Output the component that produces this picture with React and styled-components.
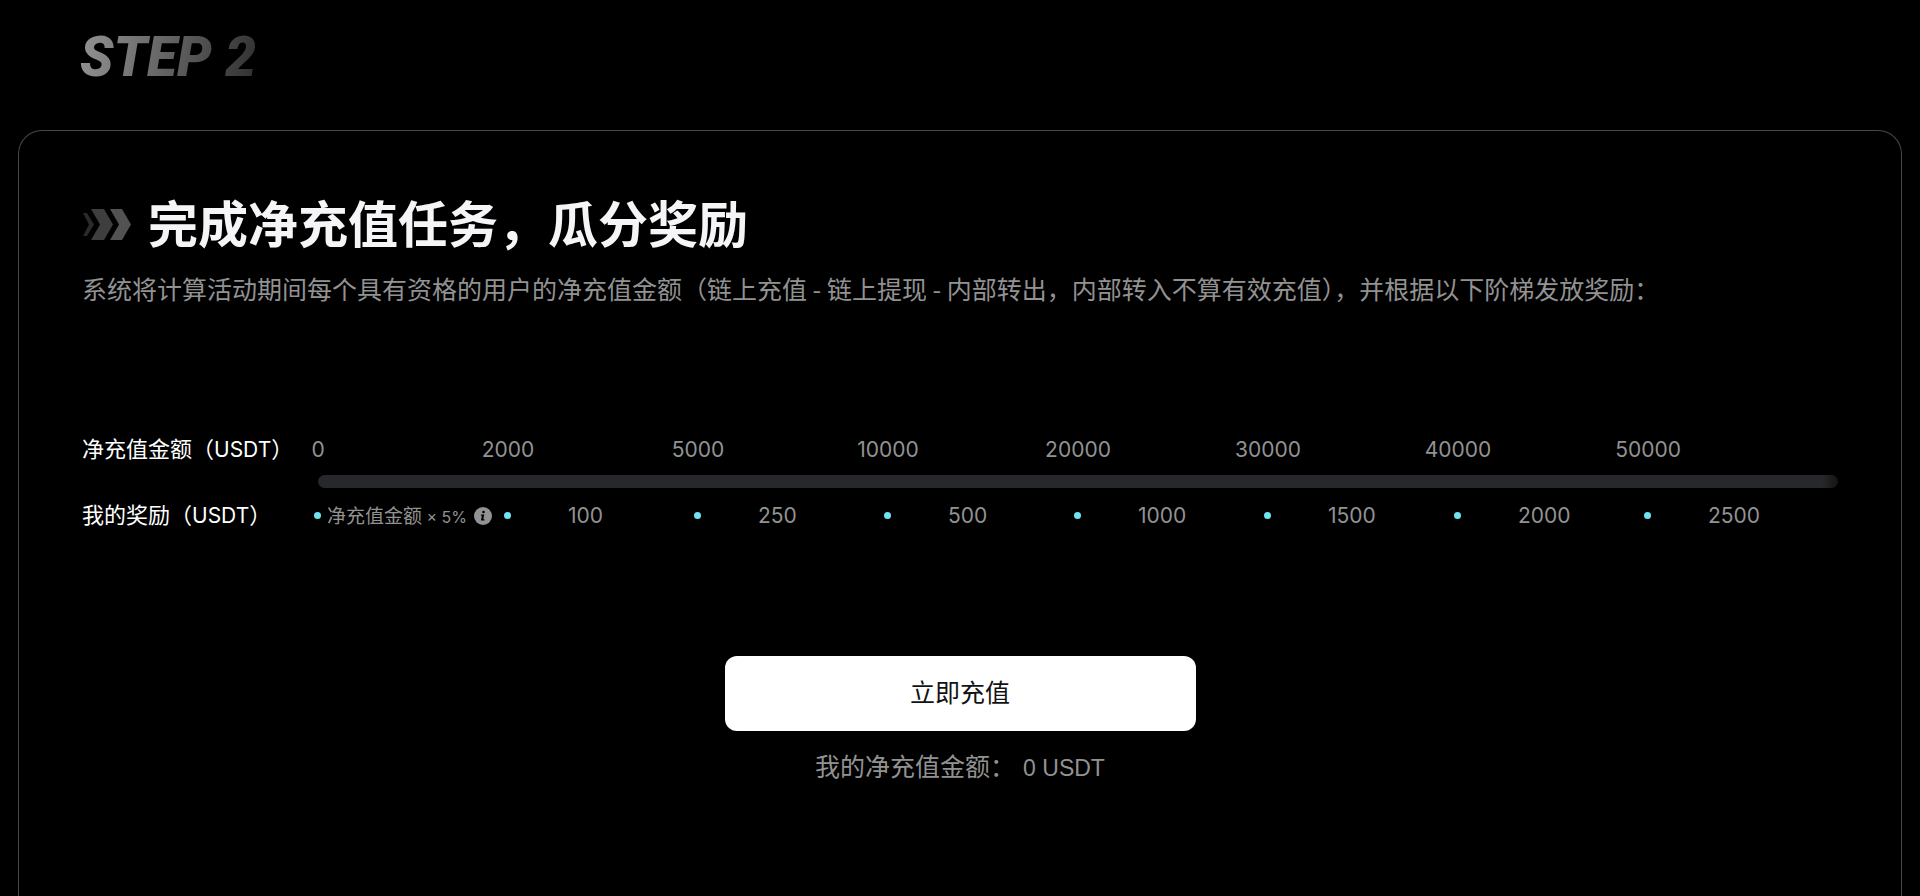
import React from "react"
import styled, { createGlobalStyle } from "styled-components"

const cjk = `"Noto Sans CJK SC", sans-serif`

const GlobalStyle = createGlobalStyle`
  * {
    box-sizing: border-box;
  }

  body {
    margin: 0;
    background: #000;
    color: #fff;
    font-family: Inter, ${cjk};
  }

  h1, h2, p {
    margin: 0;
  }
`

const Page = styled.main`
  display: flex;
  flex-direction: column;
  min-height: 100vh;
  padding: 24px 18px 0;
`

const StepTitle = styled.h1`
  align-self: flex-start;
  margin-left: 62px;
  padding-right: 8px;
  font: italic 900 55px/66px Roboto, sans-serif;
  color: transparent;
  background: linear-gradient(100deg, #949494, #2c2c2c);
  background-clip: text;
`

const Card = styled.section`
  flex: 1;
  margin-top: 40px;
  padding: 56px 63px 80px;
  border: 1px solid #484848;
  border-bottom: 0;
  border-radius: 24px 24px 0 0;
`

const Heading = styled.div`
  display: flex;
  align-items: center;
  gap: 16px;
`

const Title = styled.h2`
  font: 600 50px/68px ${cjk};
  color: #f5f5f7;
`

const Description = styled.p`
  margin-top: 15px;
  font: 400 25px/36px ${cjk};
  color: #929292;
`

const Ladder = styled.div`
  display: grid;
  grid-template-columns: 236px 1fr;
  row-gap: 9px;
  align-items: center;
  margin-top: 125px;
`

const RowLabel = styled.div`
  font: 400 22px/32px ${cjk};
  white-space: nowrap;
`

const Unit = styled.span`
  font-family: Inter, sans-serif;
  font-size: 21px;
`

const Steps = styled.div`
  display: grid;
  grid-template-columns: repeat(8, minmax(0, 1fr));
  align-items: center;
  height: 32px;
  padding-top: 2px;
  font-size: 21px;
  color: #929292;
`

// zero-width box, so the number is centred on the start of its step
const Amount = styled.div`
  display: flex;
  justify-content: center;
  width: 0;
`

const Track = styled.div`
  grid-column: 2;
  height: 13px;
  border-radius: 7px;
  background: linear-gradient(to left, #141415, #26282b 16px);
`

const Reward = styled.div`
  display: flex;
  align-items: center;

  &::before {
    content: "";
    flex: none;
    width: 7px;
    height: 7px;
    margin-left: -4px;
    border-radius: 50%;
    background: #6fe3f2;
  }
`

const RewardValue = styled.span`
  margin-left: 57px;
`

const RateValue = styled.span`
  display: flex;
  align-items: center;
  gap: 7px;
  margin-left: 6px;
  font: 400 19px/26px ${cjk};
  white-space: nowrap;
`

const Rate = styled.span`
  font-family: Inter, sans-serif;
  font-size: 16px;
`

const InfoButton = styled.button`
  display: flex;
  padding: 0;
  border: 0;
  background: none;
  color: inherit;
  cursor: pointer;
`

const Action = styled.div`
  display: flex;
  flex-direction: column;
  align-items: center;
  gap: 16px;
  margin-top: 124px;
`

const DepositButton = styled.button`
  width: 471px;
  max-width: 100%;
  height: 75px;
  padding: 0 0 6px;
  border: 0;
  border-radius: 12px;
  background: #fff;
  color: #121212;
  font: 400 25px/36px ${cjk};
  cursor: pointer;
`

const MyAmount = styled.p`
  display: flex;
  align-items: baseline;
  gap: 8px;
  font: 400 25px/36px ${cjk};
  color: #929292;
`

const MyValue = styled.span`
  font-family: "Liberation Sans", sans-serif;
  font-size: 23px;
`

const steps = [
  { amount: 0 },
  { amount: 2000, reward: 100 },
  { amount: 5000, reward: 250 },
  { amount: 10000, reward: 500 },
  { amount: 20000, reward: 1000 },
  { amount: 30000, reward: 1500 },
  { amount: 40000, reward: 2000 },
  { amount: 50000, reward: 2500 },
]

const Chevrons = () => (
  <svg width="50" height="38" viewBox="0 -7 50 38" aria-hidden="true">
    <path d="M1 4h4l7 11.5L5 27H1l6-11.5z" fill="#2a2a2a" />
    <path d="M9 0h13l9 15.5L22 31H9l9-15.5z" fill="#3e3e3e" />
    <path d="M28 0h12l9 15.5L40 31H28l9-15.5z" fill="#525252" />
  </svg>
)

const InfoIcon = () => (
  <svg width="18" height="18" viewBox="0 0 18 18" aria-hidden="true">
    <circle cx="9" cy="9" r="9" fill="currentColor" />
    <circle cx="9.5" cy="5" r="1.3" fill="#000" />
    <path d="M7 7.5h3.3l-1 4.8h1.2v1.2H6.9l1-4.8H6.8z" fill="#000" />
  </svg>
)

export default function App() {
  return (
    <>
      <GlobalStyle />
      <Page>
        <StepTitle>STEP 2</StepTitle>
        <Card>
          <Heading>
            <Chevrons />
            <Title>完成净充值任务，瓜分奖励</Title>
          </Heading>
          <Description>
            系统将计算活动期间每个具有资格的用户的净充值金额（链上充值 - 链上提现
            - 内部转出，内部转入不算有效充值），并根据以下阶梯发放奖励：
          </Description>

          <Ladder>
            <RowLabel>
              净充值金额（<Unit>USDT</Unit>）
            </RowLabel>
            <Steps>
              {steps.map(({ amount }) => (
                <Amount key={amount}>{amount}</Amount>
              ))}
            </Steps>
            <Track />
            <RowLabel>
              我的奖励（<Unit>USDT</Unit>）
            </RowLabel>
            <Steps>
              {steps.map(({ amount, reward }) => (
                <Reward key={amount}>
                  {reward ? (
                    <RewardValue>{reward}</RewardValue>
                  ) : (
                    <RateValue>
                      <span>
                        净充值金额<Rate> × 5%</Rate>
                      </span>
                      <InfoButton type="button" aria-label="奖励说明">
                        <InfoIcon />
                      </InfoButton>
                    </RateValue>
                  )}
                </Reward>
              ))}
            </Steps>
          </Ladder>

          <Action>
            <DepositButton type="button">立即充值</DepositButton>
            <MyAmount>
              我的净充值金额：
              <MyValue>0 USDT</MyValue>
            </MyAmount>
          </Action>
        </Card>
      </Page>
    </>
  )
}
